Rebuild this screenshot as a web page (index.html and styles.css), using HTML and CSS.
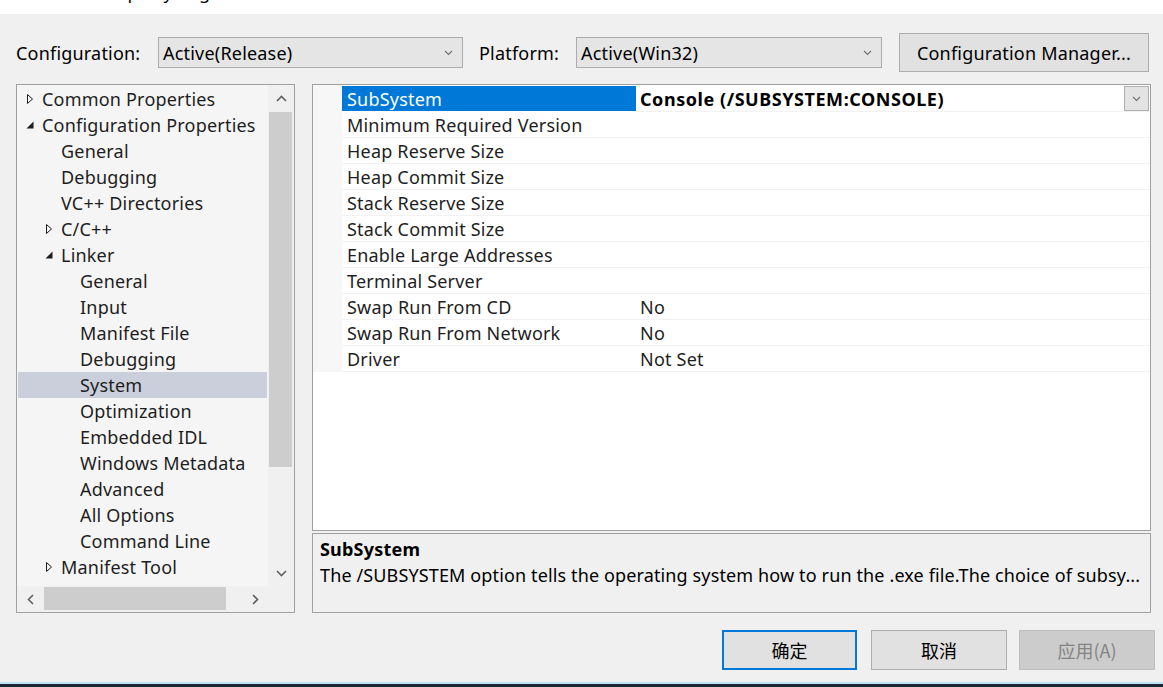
FILE: index.html
```html
<!DOCTYPE html>
<html>
<head>
<meta charset="utf-8">
<link rel="stylesheet" href="styles.css">
</head>
<body>
<div class="dialog">
  <div class="titlebar"><span class="title">Property Pages</span></div>

  <div class="config-row">
    <span class="lbl lbl-config">Configuration:</span>
    <div class="combo combo-config">
      <span>Active(Release)</span>
      <svg class="chev" width="9" height="6" viewBox="0 0 9 6"><polyline points="1,1 4.5,4.5 8,1" fill="none" stroke="#707070" stroke-width="1.1"/></svg>
    </div>
    <span class="lbl lbl-platform">Platform:</span>
    <div class="combo combo-platform">
      <span>Active(Win32)</span>
      <svg class="chev" width="9" height="6" viewBox="0 0 9 6"><polyline points="1,1 4.5,4.5 8,1" fill="none" stroke="#707070" stroke-width="1.1"/></svg>
    </div>
    <div class="btn btn-manager">Configuration Manager...</div>
  </div>

  <div class="main">
    <div class="tree">
      <div class="tree-body">
        <div class="tree-rows">
          <div class="trow"><span class="ind0"></span><span class="arr"><svg width="8" height="12" viewBox="0 0 8 12"><path d="M1.5 1.5 L6.5 6 L1.5 10.5 Z" fill="none" stroke="#1e1e1e" stroke-width="1"/></svg></span><span class="tlabel">Common Properties</span></div>
          <div class="trow"><span class="ind0"></span><span class="arr"><svg width="8" height="8" viewBox="0 0 8 8"><path d="M7.5 0.5 L7.5 7.5 L0.5 7.5 Z" fill="#1e1e1e"/></svg></span><span class="tlabel">Configuration Properties</span></div>
          <div class="trow"><span class="ind1"></span><span class="arr"></span><span class="tlabel">General</span></div>
          <div class="trow"><span class="ind1"></span><span class="arr"></span><span class="tlabel">Debugging</span></div>
          <div class="trow"><span class="ind1"></span><span class="arr"></span><span class="tlabel">VC++ Directories</span></div>
          <div class="trow"><span class="ind1"></span><span class="arr"><svg width="8" height="12" viewBox="0 0 8 12"><path d="M1.5 1.5 L6.5 6 L1.5 10.5 Z" fill="none" stroke="#1e1e1e" stroke-width="1"/></svg></span><span class="tlabel">C/C++</span></div>
          <div class="trow"><span class="ind1"></span><span class="arr"><svg width="8" height="8" viewBox="0 0 8 8"><path d="M7.5 0.5 L7.5 7.5 L0.5 7.5 Z" fill="#1e1e1e"/></svg></span><span class="tlabel">Linker</span></div>
          <div class="trow"><span class="ind2"></span><span class="arr"></span><span class="tlabel">General</span></div>
          <div class="trow"><span class="ind2"></span><span class="arr"></span><span class="tlabel">Input</span></div>
          <div class="trow"><span class="ind2"></span><span class="arr"></span><span class="tlabel">Manifest File</span></div>
          <div class="trow"><span class="ind2"></span><span class="arr"></span><span class="tlabel">Debugging</span></div>
          <div class="trow trow-sel"><span class="ind2"></span><span class="arr"></span><span class="tlabel">System</span></div>
          <div class="trow"><span class="ind2"></span><span class="arr"></span><span class="tlabel">Optimization</span></div>
          <div class="trow"><span class="ind2"></span><span class="arr"></span><span class="tlabel">Embedded IDL</span></div>
          <div class="trow"><span class="ind2"></span><span class="arr"></span><span class="tlabel">Windows Metadata</span></div>
          <div class="trow"><span class="ind2"></span><span class="arr"></span><span class="tlabel">Advanced</span></div>
          <div class="trow"><span class="ind2"></span><span class="arr"></span><span class="tlabel">All Options</span></div>
          <div class="trow"><span class="ind2"></span><span class="arr"></span><span class="tlabel">Command Line</span></div>
          <div class="trow"><span class="ind1"></span><span class="arr"><svg width="8" height="12" viewBox="0 0 8 12"><path d="M1.5 1.5 L6.5 6 L1.5 10.5 Z" fill="none" stroke="#1e1e1e" stroke-width="1"/></svg></span><span class="tlabel">Manifest Tool</span></div>
        </div>
        <div class="vscroll">
          <div class="sbtn"><svg width="11" height="7" viewBox="0 0 11 7"><polyline points="1,6 5.5,1.5 10,6" fill="none" stroke="#606060" stroke-width="1.6"/></svg></div>
          <div class="vthumb"></div>
          <div class="sfill"></div>
          <div class="sbtn"><svg width="11" height="7" viewBox="0 0 11 7"><polyline points="1,1 5.5,5.5 10,1" fill="none" stroke="#606060" stroke-width="1.6"/></svg></div>
        </div>
      </div>
      <div class="hscroll">
        <div class="sbtn"><svg width="7" height="11" viewBox="0 0 7 11"><polyline points="6,1 1.5,5.5 6,10" fill="none" stroke="#606060" stroke-width="1.6"/></svg></div>
        <div class="hthumb"></div>
        <div class="sfill"></div>
        <div class="sbtn"><svg width="7" height="11" viewBox="0 0 7 11"><polyline points="1,1 5.5,5.5 1,10" fill="none" stroke="#606060" stroke-width="1.6"/></svg></div>
        <div class="corner"></div>
      </div>
    </div>

    <div class="right">
      <div class="grid">
        <div class="grid-rows">
          <div class="prow prow-sel"><div class="gut"></div><div class="pname">SubSystem</div><div class="pval pval-bold"><span>Console (/SUBSYSTEM:CONSOLE)</span><div class="dd"><svg width="9" height="6" viewBox="0 0 9 6"><polyline points="1,1 4.5,4.5 8,1" fill="none" stroke="#707070" stroke-width="1.1"/></svg></div></div></div>
          <div class="prow"><div class="gut"></div><div class="pname">Minimum Required Version</div><div class="pval"></div></div>
          <div class="prow"><div class="gut"></div><div class="pname">Heap Reserve Size</div><div class="pval"></div></div>
          <div class="prow"><div class="gut"></div><div class="pname">Heap Commit Size</div><div class="pval"></div></div>
          <div class="prow"><div class="gut"></div><div class="pname">Stack Reserve Size</div><div class="pval"></div></div>
          <div class="prow"><div class="gut"></div><div class="pname">Stack Commit Size</div><div class="pval"></div></div>
          <div class="prow"><div class="gut"></div><div class="pname">Enable Large Addresses</div><div class="pval"></div></div>
          <div class="prow"><div class="gut"></div><div class="pname">Terminal Server</div><div class="pval"></div></div>
          <div class="prow"><div class="gut"></div><div class="pname">Swap Run From CD</div><div class="pval">No</div></div>
          <div class="prow"><div class="gut"></div><div class="pname">Swap Run From Network</div><div class="pval">No</div></div>
          <div class="prow"><div class="gut"></div><div class="pname">Driver</div><div class="pval">Not Set</div></div>
        </div>
      </div>
      <div class="desc">
        <div class="desc-title">SubSystem</div>
        <div class="desc-text">The /SUBSYSTEM option tells the operating system how to run the .exe file.The choice of subsy...</div>
      </div>
    </div>
  </div>

  <div class="buttons">
    <div class="dbtn dbtn-default">确定</div>
    <div class="dbtn dbtn-cancel">取消</div>
    <div class="dbtn dbtn-disabled">应用(A)</div>
  </div>

  <div class="taskline"></div>
  <div class="taskbar"></div>
</div>
</body>
</html>
```

FILE: styles.css
```css
* { box-sizing: border-box; }
html, body { margin: 0; padding: 0; }
body {
  width: 1163px;
  height: 687px;
  overflow: hidden;
  background: #f0f0f0;
  font-family: "Noto Sans", "Noto Sans CJK SC", sans-serif;
  font-size: 18px;
  letter-spacing: 0.2px;
  color: #1e1e1e;
}
.dialog { display: flex; flex-direction: column; height: 687px; }

.titlebar { flex: none; height: 14px; background: #fff; overflow: hidden; }
.title { display: block; line-height: 20px; margin-top: -18px; padding-left: 98px; color: #000; white-space: nowrap; }

.config-row { flex: none; display: flex; align-items: center; height: 39px; margin-top: 19px; padding-left: 16px; color: #000; }
.lbl { white-space: nowrap; }
.lbl-config { width: 142px; }
.lbl-platform { width: 97px; margin-left: 16px; }
.combo {
  height: 31px;
  background: #e5e5e5;
  border: 1px solid #acacac;
  display: flex;
  align-items: center;
  justify-content: space-between;
  padding: 0 9px 0 4px;
  white-space: nowrap;
}
.combo-config { width: 305px; }
.combo-platform { width: 306px; }
.btn {
  background: #e1e1e1;
  border: 1px solid #adadad;
  display: flex;
  align-items: center;
  justify-content: center;
  white-space: nowrap;
}
.btn-manager { width: 250px; height: 39px; margin-left: 17px; }

.main { flex: none; display: flex; gap: 17px; height: 529px; margin-top: 12px; padding-left: 16px; }

.tree { width: 279px; height: 529px; border: 1px solid #a0a0a0; background: #f5f5f5; display: flex; flex-direction: column; }
.tree-body { display: flex; height: 501px; }
.tree-rows { width: 251px; padding-top: 1px; overflow: hidden; }
.trow { display: flex; align-items: center; height: 26px; margin: 0 1px 0 0; white-space: nowrap; }
.trow-sel { background: #cbcedb; margin-left: 1px; }
.trow-sel .ind2 { width: 37px; }
.ind0 { width: 0; flex: none; }
.ind1 { width: 19px; flex: none; }
.ind2 { width: 38px; flex: none; }
.arr { width: 25px; flex: none; display: flex; align-items: center; padding-left: 9px; height: 26px; }
.tlabel { line-height: 26px; }

.vscroll { width: 26px; background: #f0f0f0; display: flex; flex-direction: column; }
.sbtn { width: 26px; height: 26px; flex: none; display: flex; align-items: center; justify-content: center; }
.vthumb { flex: none; height: 355px; margin: 1px 2px 0 1px; background: #cdcdcd; }
.sfill { flex: 1; }
.hscroll { height: 26px; display: flex; background: #f0f0f0; }
.hthumb { flex: none; width: 182px; height: 23px; margin: 1px 0 0 1px; background: #cdcdcd; }
.corner { width: 26px; flex: none; background: #f0f0f0; }

.right { width: 839px; display: flex; flex-direction: column; gap: 2px; }
.grid { height: 447px; border: 1px solid #a0a0a0; background: #fff; }
.grid-rows { padding-top: 1px; background: linear-gradient(to right, #f7f7f7 29px, transparent 29px); }
.prow { display: flex; height: 26px; }
.gut { width: 29px; flex: none; }
.pname { width: 294px; height: 26px; flex: none; padding-left: 5px; line-height: 26px; border-bottom: 1px solid #f2f2f2; white-space: nowrap; color: #1e1e1e; }
.pval { flex: 1; height: 26px; padding-left: 4px; line-height: 26px; border-bottom: 1px solid #f2f2f2; display: flex; justify-content: space-between; white-space: nowrap; color: #1e1e1e; }
.prow-sel .pname { background: #0078d7; color: #fff; border-bottom-color: #fff; }
.pval-bold { font-weight: bold; color: #000; letter-spacing: 0.55px; }
.dd { width: 25px; height: 25px; margin-right: 1px; background: #e3e3e3; border: 1px solid #b0b0b0; display: flex; align-items: center; justify-content: center; }

.desc { height: 80px; border: 1px solid #a0a0a0; background: #f0f0f0; padding: 2px 0 0 7px; line-height: 26px; color: #000; overflow: hidden; }
.desc-title { font-weight: bold; }
.desc-text { white-space: nowrap; letter-spacing: 0.13px; }

.buttons { flex: none; display: flex; height: 40px; margin-top: 17px; padding-left: 722px; }
.dbtn {
  height: 40px;
  background: #e1e1e1;
  border: 1px solid #adadad;
  display: flex;
  align-items: center;
  justify-content: center;
  font-family: "Noto Sans CJK SC", sans-serif;
  letter-spacing: 0;
  color: #000;
}
.dbtn-default { width: 135px; border: 2px solid #0078d7; }
.dbtn-cancel { width: 136px; margin-left: 14px; }
.dbtn-disabled { width: 136px; margin-left: 12px; background: #cccccc; border-color: #bfbfbf; color: #838383; }

.taskline { flex: none; height: 2px; margin-top: 12px; background: #bfe0f5; }
.taskbar { flex: none; height: 3px; background: #1c2532; }
```
